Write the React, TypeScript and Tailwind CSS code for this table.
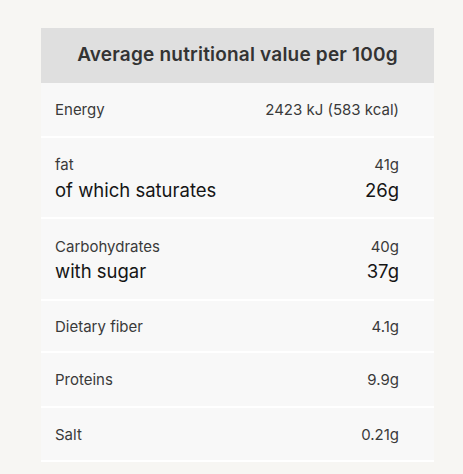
import React from 'react'

const rows: { label: string; value: string; h: string; sub?: { label: string; value: string } }[] = [
  { label: 'Energy', value: '2423 kJ (583 kcal)', h: 'h-[55px]' },
  { label: 'fat', value: '41g', h: 'h-[81px]', sub: { label: 'of which saturates', value: '26g' } },
  { label: 'Carbohydrates', value: '40g', h: 'h-[82px]', sub: { label: 'with sugar', value: '37g' } },
  { label: 'Dietary fiber', value: '4.1g', h: 'h-[52px]' },
  { label: 'Proteins', value: '9.9g', h: 'h-[55px]' },
  { label: 'Salt', value: '0.21g', h: 'h-[54px]' },
]

export default function App() {
  return (
    <main className="min-h-[474px] bg-[#f7f6f3] pt-[28px] pl-[41px] font-['Inter',sans-serif]">
      <div className="w-[393px]">
        {/* Header */}
        <div className="h-[55px] bg-[#dfdfdf] flex items-center justify-center">
          <h2 className="text-[19px] font-semibold text-[#333] tracking-[0.2px]">Average nutritional value per 100g</h2>
        </div>

        {rows.map((row) =>
          row.sub ? (
            <div key={row.label} className={`${row.h} bg-[#f8f8f8] border-b-2 border-white pl-[14px] pr-[35px] pt-[4px] flex flex-col justify-center`}>
              <div className="flex justify-between h-[22px] items-center text-[15px] text-[#3a3a3a]">
                <span>{row.label}</span>
                <span>{row.value}</span>
              </div>
              <div className="flex justify-between h-[28px] items-center text-[18.5px] text-[#151515]">
                <span>{row.sub.label}</span>
                <span>{row.sub.value}</span>
              </div>
            </div>
          ) : (
            <div
              key={row.label}
              className={`${row.h} bg-[#f8f8f8] border-b-2 border-white pl-[14px] pr-[35px] pt-[2px] flex items-center justify-between text-[15px] text-[#3a3a3a]`}
            >
              <span>{row.label}</span>
              <span>{row.value}</span>
            </div>
          )
        )}
      </div>
    </main>
  )
}
